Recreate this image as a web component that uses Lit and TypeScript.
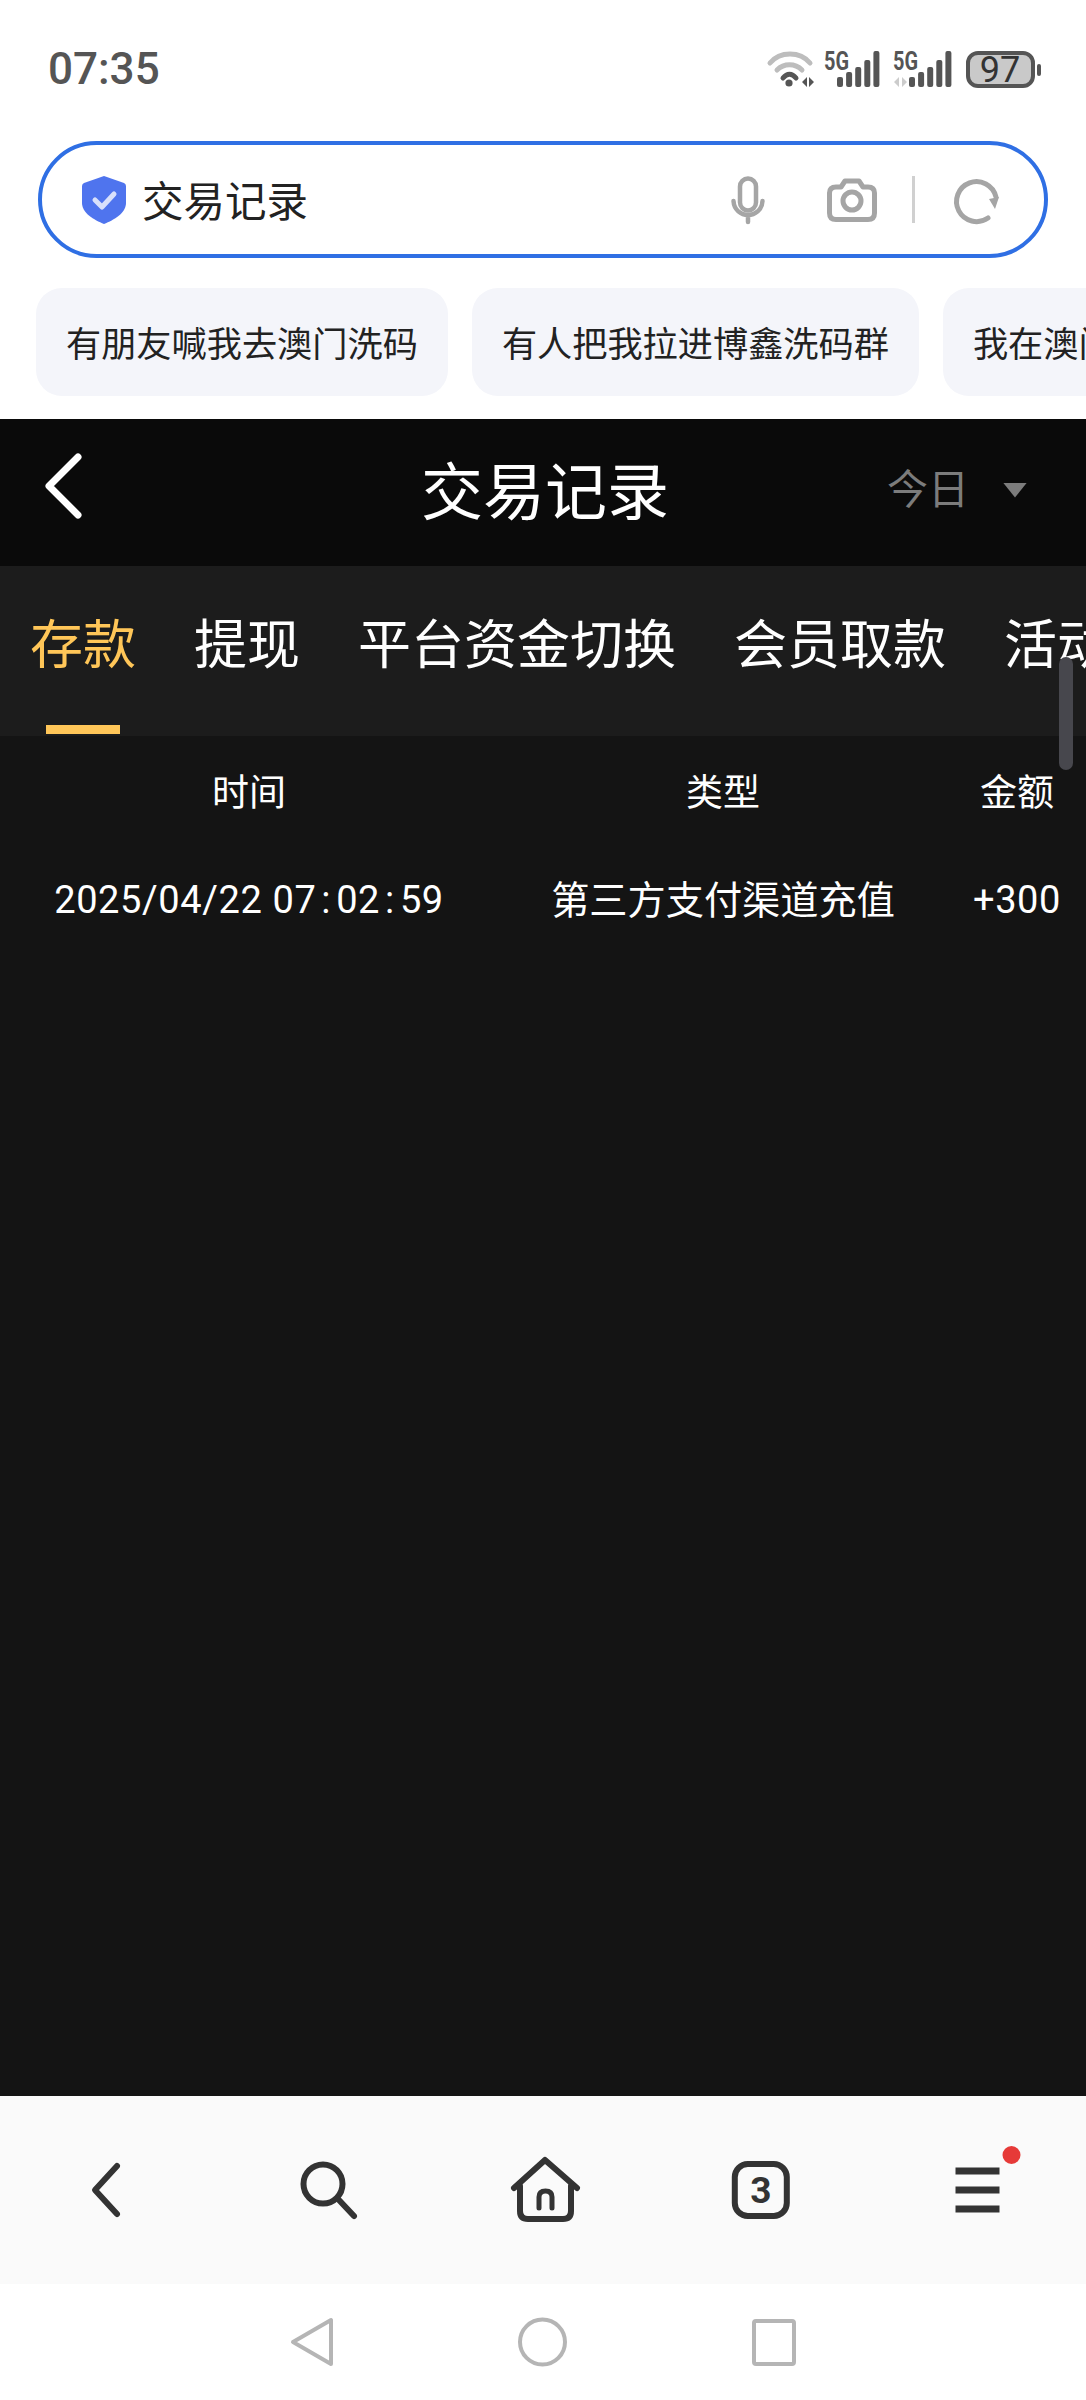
import { LitElement, html, css, svg } from 'lit';
import { customElement } from 'lit/decorators.js';

const TABS = ['存款', '提现', '平台资金切换', '会员取款', '活动记录'];
const CHIPS = ['有朋友喊我去澳门洗码', '有人把我拉进博鑫洗码群', '我在澳门洗码被骗了'];

@customElement('app-root')
export class AppRoot extends LitElement {
  static styles = css`
    * {
      box-sizing: border-box;
    }

    :host {
      display: block;
      position: relative;
      width: 1086px;
      height: 2400px;
      overflow: hidden;
      background: #fff;
      font-family: 'Noto Sans CJK SC', 'Noto Sans', sans-serif;
    }

    svg {
      display: block;
      flex-shrink: 0;
      overflow: visible;
    }

    .page {
      display: flex;
      flex-direction: column;
      height: 100%;
    }

    /* status bar */
    .status {
      display: flex;
      align-items: center;
      justify-content: space-between;
      height: 141px;
      padding: 0 44px 3px 48px;
    }

    .time {
      font-family: Roboto, sans-serif;
      font-size: 44px;
      font-weight: 500;
      color: #555;
    }

    .status-icons {
      display: flex;
      gap: 10px;
    }

    /* search box */
    .search {
      display: flex;
      align-items: center;
      height: 117px;
      margin: 0 38px;
      padding: 0 45px 0 39px;
      border: 4px solid #2f6fe4;
      border-radius: 59px;
    }

    .search-text {
      margin: 0 0 2px 15px;
      font-size: 41.5px;
      color: #222;
    }

    .tools {
      display: flex;
      align-items: center;
      gap: 35px;
      margin-left: auto;
    }

    .mic {
      margin-right: 27px;
    }

    .divider {
      width: 3px;
      height: 47px;
      margin-right: 5px;
      background: #d0d0d0;
    }

    /* suggestion chips */
    .chips {
      display: flex;
      gap: 24px;
      height: 108px;
      margin: 30px 0 23px;
      padding-left: 36px;
      overflow: hidden;
    }

    .chip {
      display: flex;
      align-items: center;
      flex-shrink: 0;
      padding: 0 30px 2px;
      border-radius: 26px;
      background: #f4f5fa;
      font-size: 35.2px;
      color: #222;
      white-space: nowrap;
    }

    /* dark app area */
    .head {
      display: grid;
      grid-template-columns: 1fr auto 1fr;
      align-items: center;
      height: 147px;
      padding: 0 41px 0 45px;
      background: #0a0a0a;
    }

    .head-back {
      margin-bottom: 13px;
    }

    .head-title {
      margin-bottom: 9px;
      font-size: 62px;
      color: #fff;
    }

    .range {
      display: flex;
      align-items: center;
      justify-content: flex-end;
      gap: 34px;
      margin-right: 18px;
      margin-bottom: 13px;
      font-size: 41px;
      color: #7c7c7c;
    }

    .caret {
      width: 24px;
      height: 15px;
      margin-top: 8px;
      background: #7c7c7c;
      clip-path: polygon(0 0, 100% 0, 50% 100%);
    }

    .tabs {
      display: flex;
      gap: 58px;
      height: 170px;
      padding-left: 30px;
      overflow: hidden;
      background: #1c1c1c;
    }

    .tab {
      display: flex;
      flex-direction: column;
      align-items: center;
      flex-shrink: 0;
      font-size: 53px;
      color: #fff;
    }

    .tab-label {
      line-height: 150px;
    }

    .tab.active {
      color: #ffc658;
    }

    .tab.active::after {
      content: '';
      width: 74px;
      height: 9px;
      margin-top: 9px;
      background: #ffc658;
    }

    .table {
      flex: 1;
      background: #141414;
      color: #fff;
    }

    .row {
      display: grid;
      grid-template-columns: 498px 450px 138px;
      align-items: center;
      text-align: center;
      white-space: nowrap;
    }

    .row.th {
      height: 110px;
      padding-bottom: 2px;
      font-size: 37px;
    }

    .row.td {
      height: 108px;
      font-size: 38.2px;
    }

    .cjk {
      margin-bottom: 5px;
    }

    .num {
      font-family: Roboto, sans-serif;
      font-size: 38px;
      letter-spacing: 0.6px;
    }

    .colon {
      margin: 0 5px;
    }

    .scrollbar {
      position: absolute;
      left: 1059px;
      top: 657px;
      width: 14px;
      height: 113px;
      border-radius: 7px;
      background: #47474d;
    }

    /* browser toolbar */
    .toolbar {
      display: grid;
      grid-template-columns: repeat(5, 1fr);
      align-items: center;
      justify-items: center;
      height: 188px;
      background: #fafafa;
    }

    /* android nav */
    .sysnav {
      display: grid;
      grid-template-columns: repeat(3, 231px);
      align-items: center;
      justify-items: center;
      justify-content: center;
      height: 116px;
      background: #fff;
    }
  `;

  private _signal(x: number, arrows: boolean) {
    const tops = [33, 28, 23, 16, 7];
    return html`<svg width=${x + 45} height="50" viewBox="0 0 ${x + 45} 50">
      <text x=${arrows ? 1 : 0} y="26" font-family="Roboto, sans-serif" font-size="25" font-weight="700"
        textLength="25" lengthAdjust="spacingAndGlyphs" fill="#555">5G</text>
      ${arrows
        ? svg`<path d="M7 33 2 38 7 43ZM10 33 15 38 10 43Z" fill="#ccc" />`
        : ''}
      ${tops.map(
        (t, i) =>
          svg`<rect x=${x + i * 9.1} y=${t} width="6" height=${43 - t} rx="2" fill="#555" />`
      )}
    </svg>`;
  }

  private _clock(value: string) {
    return value.split(':').map(
      (part, i) => html`${i > 0 ? html`<span class="colon">:</span>` : ''}${part}`
    );
  }

  render() {
    return html`
      <div class="page">
        <div class="status">
          <span class="time">07:35</span>
          <div class="status-icons">
            <svg width="47" height="50" viewBox="0 0 47 50" fill="none" stroke-linecap="round">
              <path d="M3 19C13 7 33 7 43 19" stroke="#bdbdbd" stroke-width="5" />
              <path d="M10 26C17 19 28 19 35 26" stroke="#bdbdbd" stroke-width="5" />
              <path d="M16 34C20 29 25 29 29 34" stroke="#555" stroke-width="5" />
              <circle cx="22" cy="39" r="3.6" fill="#555" />
              <path d="M40 33 35 38 40 43ZM42 33 47 38 42 43Z" fill="#555" />
            </svg>
            ${this._signal(13, false)} ${this._signal(17, true)}
            <svg width="78" height="50" viewBox="0 0 78 50">
              <rect x="4" y="9" width="65" height="33" rx="10" fill="#c9c9c9" stroke="#555" stroke-width="4" />
              <text x="36" y="38" text-anchor="middle" font-family="Roboto, sans-serif" font-size="36" fill="#333">97</text>
              <rect x="73" y="20" width="4" height="12" rx="2" fill="#555" />
            </svg>
          </div>
        </div>

        <div class="search">
          <svg width="46" height="50" viewBox="0 0 46 50">
            <path d="M23 1 43 8Q45 9 45 11V28C45 38 33 45 23 49C13 45 1 38 1 28V11Q1 9 3 8Z" fill="#4f74ee" />
            <path d="M14 25 21 32 33 19" fill="none" stroke="#d8e0fb" stroke-width="5" stroke-linecap="round" stroke-linejoin="round" />
          </svg>
          <span class="search-text">交易记录</span>
          <div class="tools">
            <svg class="mic" width="34" height="48" viewBox="0 0 34 48" fill="none" stroke="#a5a5a5" stroke-width="4.500" stroke-linecap="round">
              <rect x="9" y="2.500" width="16" height="32" rx="8" />
              <path d="M2.500 25C3 34 10 39 17 39S31 34 31.500 25M17 39V46" />
            </svg>
            <svg width="50" height="44" viewBox="0 0 50 44" fill="none" stroke="#a5a5a5" stroke-width="5" stroke-linejoin="round">
              <path d="M9 9H14L18 3H32L36 9H41Q47.500 9 47.500 15V35Q47.500 41.500 41 41.500H9Q2.500 41.500 2.500 35V15Q2.500 9 9 9Z" />
              <circle cx="25" cy="23" r="9" />
            </svg>
            <div class="divider"></div>
            <svg width="44" height="46" viewBox="0 0 44 46" fill="none">
              <path d="M33 41A20 20 0 1 1 41 20" stroke="#a5a5a5" stroke-width="5" stroke-linecap="round" />
              <path d="M34 22 44 20 40 32Z" fill="#a5a5a5" />
            </svg>
          </div>
        </div>

        <div class="chips">
          ${CHIPS.map(chip => html`<div class="chip">${chip}</div>`)}
        </div>

        <div class="head">
          <svg class="head-back" width="37" height="64" viewBox="0 0 37 64" fill="none" stroke="#fff" stroke-width="7" stroke-linecap="round" stroke-linejoin="round">
            <path d="M33 3 4 32 33 61" />
          </svg>
          <span class="head-title">交易记录</span>
          <div class="range">
            <span>今日</span>
            <div class="caret"></div>
          </div>
        </div>

        <div class="tabs">
          ${TABS.map(
            (tab, i) => html`
              <div class="tab ${i === 0 ? 'active' : ''}">
                <span class="tab-label">${tab}</span>
              </div>
            `
          )}
        </div>

        <div class="table">
          <div class="row th">
            <span>时间</span>
            <span>类型</span>
            <span>金额</span>
          </div>
          <div class="row td">
            <span class="num">2025/04/22 ${this._clock('07:02:59')}</span>
            <span class="cjk">第三方支付渠道充值</span>
            <span class="num">+300</span>
          </div>
        </div>

        <div class="toolbar">
          <svg width="72" height="72" viewBox="0 0 72 72" fill="none" stroke="#333" stroke-width="6" stroke-linecap="round" stroke-linejoin="round">
            <path d="M44 12 22 36 44 60" />
          </svg>
          <svg width="72" height="72" viewBox="0 0 72 72" fill="none" stroke="#333" stroke-width="6" stroke-linecap="round">
            <circle cx="33" cy="30" r="19.500" />
            <path d="M48 45 64 62" />
          </svg>
          <svg width="72" height="72" viewBox="0 0 72 72" fill="none" stroke="#333" stroke-linecap="round" stroke-linejoin="round">
            <path d="M7 34 38 6 70 34" stroke-width="6" />
            <path d="M13 32V57Q13 65 21 65H56Q64 65 64 57V32" stroke-width="6" />
            <path d="M32 54V43Q32 37 38.500 37T45 43V54" stroke-width="5" />
          </svg>
          <svg width="72" height="72" viewBox="0 0 72 72" fill="none">
            <rect x="10.800" y="10" width="52" height="52" rx="13" stroke="#333" stroke-width="6" />
            <text x="36.800" y="49" text-anchor="middle" font-family="Roboto, sans-serif" font-size="37" font-weight="700" fill="#333">3</text>
          </svg>
          <svg width="72" height="72" viewBox="0 0 72 72" fill="none">
            <path d="M14.500 17H58.500M14.500 36H58.500M14.500 55H58.500" stroke="#333" stroke-width="7" />
            <circle cx="70.500" cy="1" r="9" fill="#e63a38" />
          </svg>
        </div>

        <div class="sysnav">
          <svg width="60" height="60" viewBox="0 0 60 60" fill="none" stroke="#b5b5b5" stroke-width="4" stroke-linejoin="round">
            <path d="M49 8V52L11 30Z" />
          </svg>
          <svg width="60" height="60" viewBox="0 0 60 60" fill="none" stroke="#b5b5b5" stroke-width="4">
            <circle cx="29.500" cy="30" r="22.500" />
          </svg>
          <svg width="60" height="60" viewBox="0 0 60 60" fill="none" stroke="#b5b5b5" stroke-width="4">
            <rect x="10" y="9" width="40" height="43" rx="2" />
          </svg>
        </div>
      </div>
      <div class="scrollbar"></div>
    `;
  }
}
